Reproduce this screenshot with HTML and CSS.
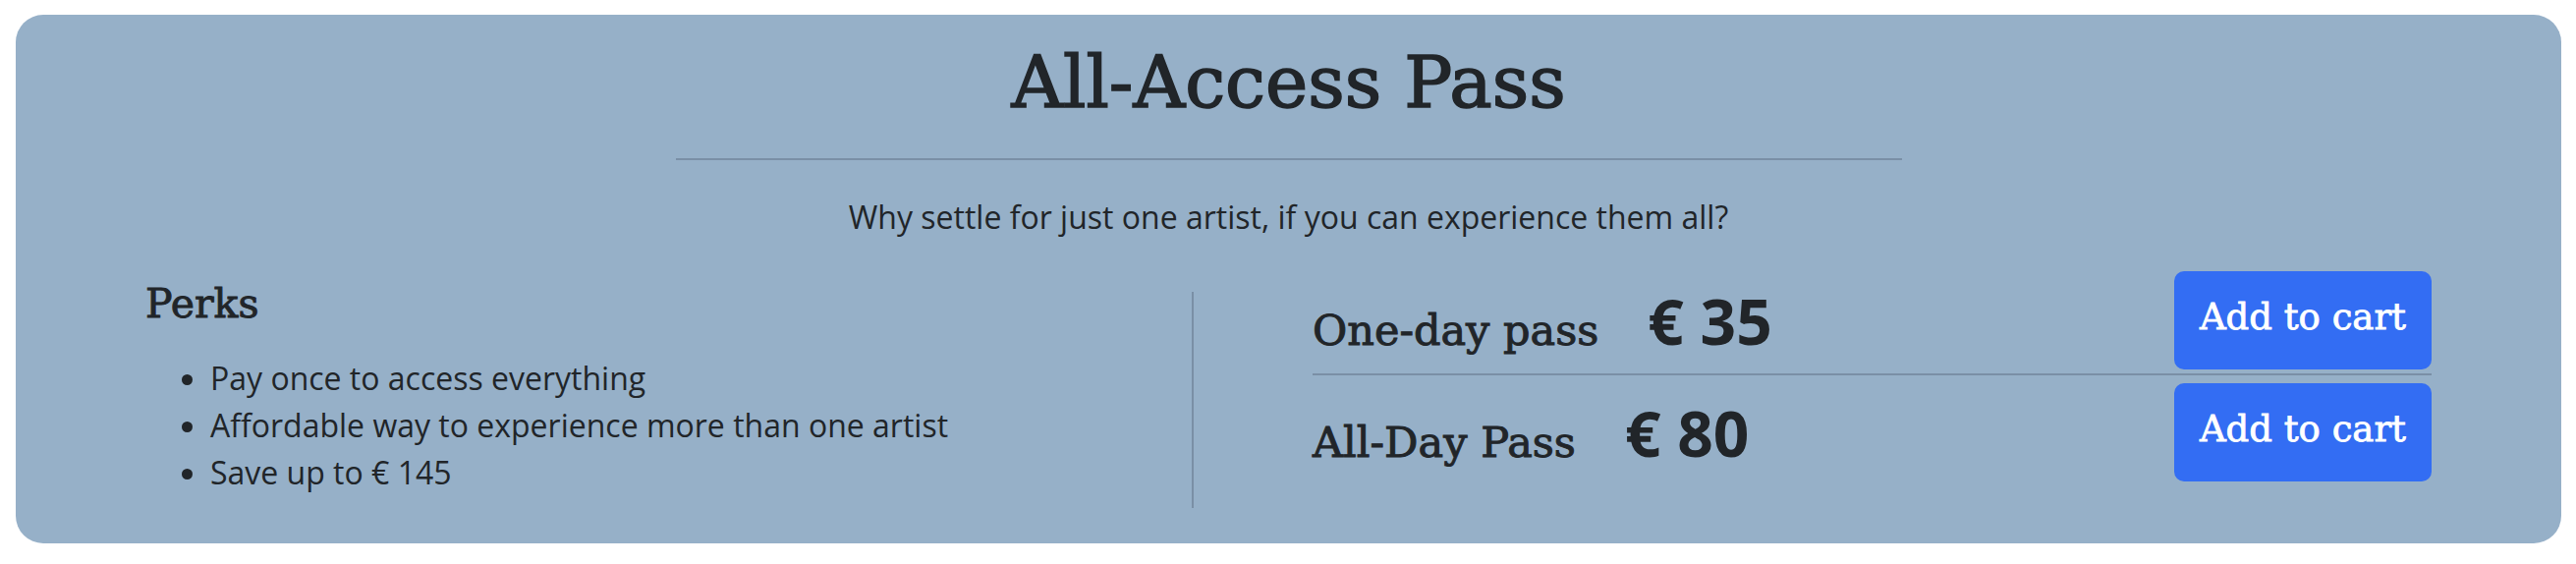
FILE: index.html
```html
<!DOCTYPE html>
<html lang="en">
<head>
<meta charset="utf-8">
<title>All-Access Pass</title>
<link rel="stylesheet" href="styles.css">
</head>
<body>
  <section class="pass-card">
    <h1 class="pass-title">All-Access Pass</h1>
    <hr class="title-rule">
    <p class="pass-tagline">Why settle for just one artist, if you can experience them all?</p>
    <div class="pass-body">
      <div class="perks">
        <h2 class="perks-title">Perks</h2>
        <ul class="perks-list">
          <li>Pay once to access everything</li>
          <li>Affordable way to experience more than one artist</li>
          <li>Save up to € 145</li>
        </ul>
      </div>
      <div class="divider"></div>
      <div class="offers">
        <div class="offer">
          <div class="offer-info">
            <h3 class="offer-name">One-day pass</h3>
            <span class="offer-price">€ 35</span>
          </div>
          <button class="cart-btn" type="button">Add to cart</button>
        </div>
        <div class="offer">
          <div class="offer-info">
            <h3 class="offer-name">All-Day Pass</h3>
            <span class="offer-price">€ 80</span>
          </div>
          <button class="cart-btn" type="button">Add to cart</button>
        </div>
      </div>
    </div>
  </section>
</body>
</html>
```
FILE: styles.css
```css
* {
  box-sizing: border-box;
}

body {
  margin: 0;
  padding: 15px 15px 0 16px;
  background: #ffffff;
  color: #212529;
  font-family: "Open Sans", "Noto Sans", sans-serif;
}

.pass-card {
  background: #96b0c8;
  border-radius: 28px;
  padding: 26px 132px 36px;
  height: 538px;
}

.serif {
  font-family: "DejaVu Serif", serif;
}

.pass-title,
.perks-title,
.offer-name,
.cart-btn {
  font-family: "DejaVu Serif", serif;
  font-weight: normal;
  -webkit-text-stroke: 0.022em currentColor;
}

.pass-title {
  margin: 0;
  text-align: center;
  font-size: 73px;
  line-height: normal;
}

.title-rule {
  width: 1248px;
  margin: 35px auto 0;
  border: 0;
  height: 2px;
  background: #7a8fa6;
}

.pass-tagline {
  margin: 34px 0 0;
  text-align: center;
  font-size: 32px;
  line-height: 48px;
}

.pass-body {
  display: flex;
  align-items: flex-start;
  margin-top: 27px;
}

.perks {
  flex: 0 0 1065px;
  padding-top: 13px;
}

.perks-title {
  margin: 0;
  font-size: 41px;
  line-height: normal;
}

.perks-list {
  margin: 28px 0 0;
  padding-left: 66px;
  font-size: 32px;
  line-height: 48px;
}

.divider {
  flex: 0 0 2px;
  height: 220px;
  margin-top: 25px;
  background: #7a8fa6;
}

.offers {
  flex: 1;
  margin-left: 121px;
}

.offer {
  display: flex;
  align-items: center;
  justify-content: space-between;
  padding: 4px 0;
}

.offer + .offer {
  border-top: 2px solid #7a8fa6;
  padding-top: 8px;
}

.offer-info {
  display: flex;
  align-items: baseline;
  gap: 50px;
}

.offer-name {
  margin: 0;
  font-size: 43px;
  line-height: normal;
}

.offer-price {
  font-family: "Open Sans", sans-serif;
  font-weight: 700;
  font-size: 64px;
  line-height: normal;
}

.cart-btn {
  border: 0;
  border-radius: 10px;
  background: #336df3;
  color: #ffffff;
  font-size: 37px;
  line-height: normal;
  padding: 25px 26px 32px;
  cursor: pointer;
}
```
